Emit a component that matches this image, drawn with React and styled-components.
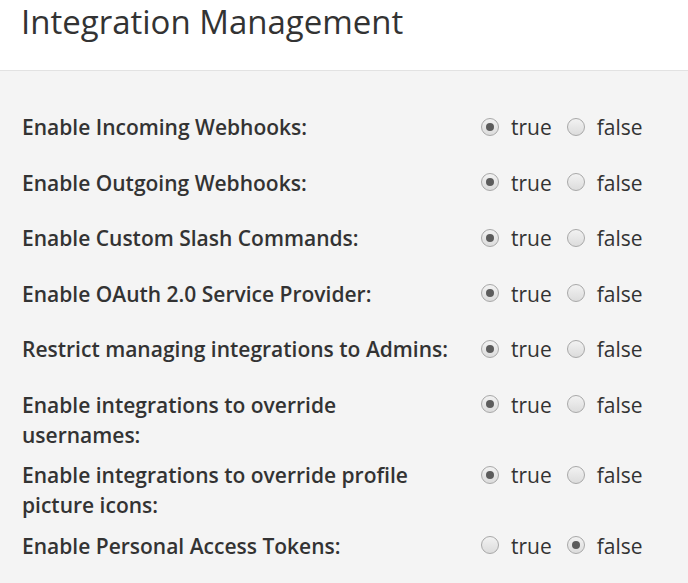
import React from "react";
import styled, { createGlobalStyle } from "styled-components";

const Global = createGlobalStyle`
  html, body { margin: 0; padding: 0; background: #f4f4f4; }
  body { font-family: "Open Sans", "Noto Sans", sans-serif; color: #333; }
  * { box-sizing: border-box; }
`;

const Header = styled.div`
  background: #fff;
  height: 71px;
  border-bottom: 1px solid #e2e2e2;
  padding: 0 21px;
`;

const Title = styled.h1`
  margin: 0;
  font-size: 33px;
  font-weight: 400;
  line-height: 44px;
  color: #333;
`;

const Body = styled.div`
  padding: 41px 22px 20px;
  display: flex;
  flex-direction: column;
  gap: 10.5px;
`;

const Row = styled.div`
  display: grid;
  grid-template-columns: 459px auto;
  min-height: 45px;
  align-items: start;
`;

const Label = styled.div`
  font-size: 21px;
  font-weight: 600;
  line-height: 30px;
  color: #333;
  padding-right: 28px;
`;

const Options = styled.div`
  display: flex;
  align-items: center;
  height: 30px;
`;

const Option = styled.label`
  display: flex;
  align-items: center;
  font-size: 21px;
  line-height: 30px;
  color: #333;
  margin-right: ${(p) => p.$mr || 0}px;
`;

const Dot = styled.span`
  width: 18px;
  height: 18px;
  border-radius: 50%;
  border: 1px solid #a8a8a8;
  background: linear-gradient(#f2f2f2, #dcdcdc);
  margin-right: 12px;
  display: flex;
  align-items: center;
  justify-content: center;
  margin-top: -1px;
  &::after {
    content: "";
    width: 8px;
    height: 8px;
    border-radius: 50%;
    background: ${(p) => (p.$on ? "#5c5c5c" : "transparent")};
  }
`;

const rows = [
  ["Enable Incoming Webhooks:", true],
  ["Enable Outgoing Webhooks:", true],
  ["Enable Custom Slash Commands:", true],
  ["Enable OAuth 2.0 Service Provider:", true],
  ["Restrict managing integrations to Admins:", true],
  ["Enable integrations to override usernames:", true],
  ["Enable integrations to override profile picture icons:", true],
  ["Enable Personal Access Tokens:", false],
];

export default function App() {
  return (
    <>
      <Global />
      <Header>
        <Title>Integration Management</Title>
      </Header>
      <Body>
        {rows.map(([label, val]) => (
          <Row key={label}>
            <Label>{label}</Label>
            <Options>
              <Option $mr={15}>
                <Dot $on={val} />
                true
              </Option>
              <Option>
                <Dot $on={!val} />
                false
              </Option>
            </Options>
          </Row>
        ))}
      </Body>
    </>
  );
}
